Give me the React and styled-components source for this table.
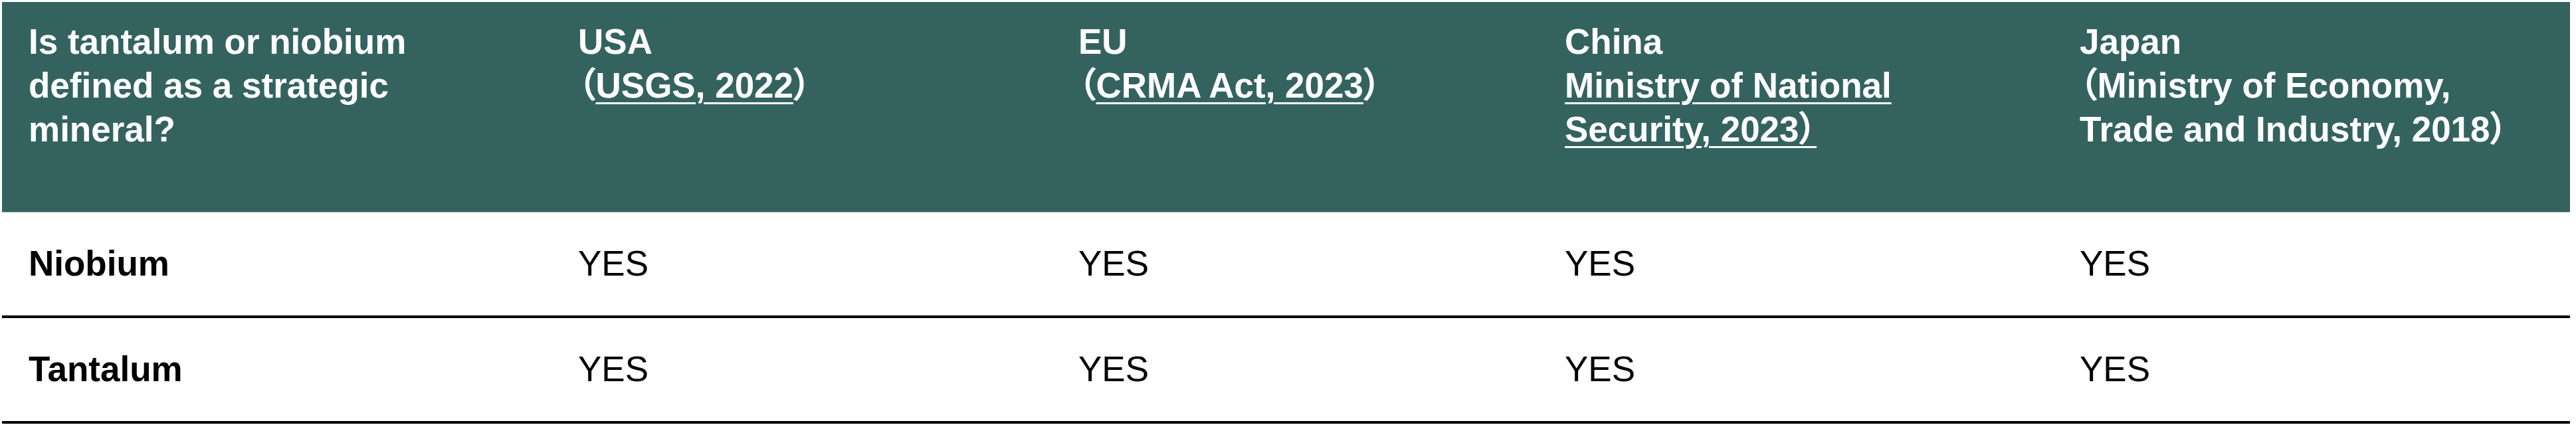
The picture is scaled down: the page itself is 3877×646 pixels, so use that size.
import React from "react";
import styled, { createGlobalStyle } from "styled-components";

const Global = createGlobalStyle`
  html, body { margin: 0; padding: 0; background: #ffffff; }
  body { font-family: "Liberation Sans", Arial, "Noto Sans CJK SC", sans-serif; }
`;

const COLS = "827px 753px 732px 775px 778px";

const Table = styled.div`
  display: flex;
  flex-direction: column;
  width: 3865px;
  margin: 3px 0 0 3px;
`;

const HeadRow = styled.div`
  display: grid;
  grid-template-columns: ${COLS};
  height: 317px;
  box-sizing: border-box;
  background: #34635f;
  border-bottom: 1px solid #9fb6b3;
`;

const HeadCell = styled.div`
  padding: 27px 40px 0 40px;
  color: #ffffff;
  font-family: "Liberation Sans", Arial, "Noto Sans CJK SC", sans-serif;
  font-weight: 700;
  font-size: 53px;
  line-height: 66px;
  font-feature-settings: "palt" 1;
`;

const Line = styled.div`
  display: block;
`;

const Source = styled.a`
  color: #ffffff;
  text-decoration: underline;
  text-decoration-thickness: 3px;
  text-underline-offset: 7px;
`;

const BodyRow = styled.div`
  display: grid;
  grid-template-columns: ${COLS};
  height: 159px;
  box-sizing: border-box;
  border-bottom: 4px solid #000000;
  align-items: center;
`;

const BodyCell = styled.div`
  padding: 0 40px;
  color: #000000;
  font-family: "Liberation Sans", Arial, sans-serif;
  font-size: 53px;
  line-height: 1.15;
  font-weight: ${(p) => (p.$label ? 700 : 400)};
`;

const rows = [
  { name: "Niobium", values: ["YES", "YES", "YES", "YES"] },
  { name: "Tantalum", values: ["YES", "YES", "YES", "YES"] },
];

export default function App() {
  return (
    <>
      <Global />
      <Table>
        <HeadRow>
          <HeadCell>Is tantalum or niobium defined as a strategic mineral?</HeadCell>
          <HeadCell>
            <Line>USA</Line>
            <Line>
              （<Source href="#">USGS, 2022</Source>）
            </Line>
          </HeadCell>
          <HeadCell>
            <Line>EU</Line>
            <Line>
              （<Source href="#">CRMA Act, 2023</Source>）
            </Line>
          </HeadCell>
          <HeadCell>
            <Line>China</Line>
            <Line>
              <Source href="#">Ministry of National Security, 2023）</Source>
            </Line>
          </HeadCell>
          <HeadCell>
            <Line>Japan</Line>
            <Line>（Ministry of Economy, Trade and Industry, 2018）</Line>
          </HeadCell>
        </HeadRow>
        {rows.map((r) => (
          <BodyRow key={r.name}>
            <BodyCell $label>{r.name}</BodyCell>
            {r.values.map((v, i) => (
              <BodyCell key={i}>{v}</BodyCell>
            ))}
          </BodyRow>
        ))}
      </Table>
    </>
  );
}
